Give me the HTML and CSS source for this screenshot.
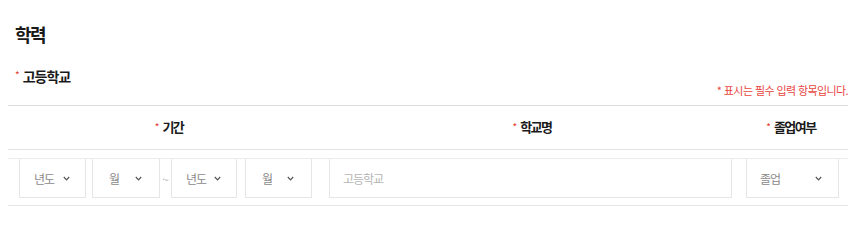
FILE: index.html
```html
<!DOCTYPE html>
<html lang="ko">
<head>
<meta charset="utf-8">
<link rel="stylesheet" href="styles.css">
</head>
<body>
<div class="wrap">
  <h2 class="title">학력</h2>
  <div class="sub"><span class="req">*</span>고등학교</div>
  <div class="note">* 표시는 필수 입력 항목입니다.</div>
  <div class="table">
    <div class="thead">
      <div class="th c1"><span class="req">*</span>기간</div>
      <div class="th c2"><span class="req">*</span>학교명</div>
      <div class="th c3"><span class="req">*</span>졸업여부</div>
    </div>
    <div class="tbody">
      <div class="sel s1"><span>년도</span><svg class="chev" width="7" height="5" viewBox="0 0 7 5"><polyline points="0.8,1 3.5,3.8 6.2,1" fill="none" stroke="#555" stroke-width="1.2"/></svg></div>
      <div class="sel s2"><span>월</span><svg class="chev" width="7" height="5" viewBox="0 0 7 5"><polyline points="0.8,1 3.5,3.8 6.2,1" fill="none" stroke="#555" stroke-width="1.2"/></svg></div>
      <div class="tilde">~</div>
      <div class="sel s3"><span>년도</span><svg class="chev" width="7" height="5" viewBox="0 0 7 5"><polyline points="0.8,1 3.5,3.8 6.2,1" fill="none" stroke="#555" stroke-width="1.2"/></svg></div>
      <div class="sel s4"><span>월</span><svg class="chev" width="7" height="5" viewBox="0 0 7 5"><polyline points="0.8,1 3.5,3.8 6.2,1" fill="none" stroke="#555" stroke-width="1.2"/></svg></div>
      <div class="input">고등학교</div>
      <div class="sel s5"><span>졸업</span><svg class="chev" width="7" height="5" viewBox="0 0 7 5"><polyline points="0.8,1 3.5,3.8 6.2,1" fill="none" stroke="#555" stroke-width="1.2"/></svg></div>
    </div>
  </div>
</div>
</body>
</html>
```

FILE: styles.css
```css
* { box-sizing: border-box; }
html, body {
  margin: 0;
  padding: 0;
  background: #fff;
  font-family: "Noto Sans CJK KR", "Noto Sans", sans-serif;
  color: #222;
}
.wrap {
  width: 856px;
  padding: 0 8px;
  overflow: hidden;
}
.title {
  margin: 22px 0 0 7px;
  font-size: 18px;
  line-height: 24px;
  height: 24px;
  font-weight: 700;
  letter-spacing: -1.5px;
  color: #1a1a1a;
}
.sub {
  margin: 20px 0 0 7px;
  font-size: 14px;
  line-height: 18px;
  height: 18px;
  font-weight: 700;
  letter-spacing: -1px;
  color: #1a1a1a;
}
.req {
  color: #e8352e;
  font-size: 10px;
  font-weight: 400;
  vertical-align: 3px;
  margin-right: 3px;
  letter-spacing: 0;
}
.note {
  text-align: right;
  font-size: 11px;
  line-height: 13px;
  height: 13px;
  color: #e8463f;
  letter-spacing: -0.6px;
  white-space: nowrap;
}
.table {
  margin-top: 8px;
  border-top: 1px solid #dcdcdc;
}
.thead {
  display: flex;
  height: 44px;
  border-bottom: 1px solid #e3e3e3;
}
.th {
  display: flex;
  align-items: center;
  justify-content: center;
  font-size: 13px;
  font-weight: 700;
  letter-spacing: -1.5px;
  color: #1a1a1a;
  padding-bottom: 2px;
}
.c1 { width: 322px; }
.c2 { width: 404px; }
.c3 { width: 114px; }
.tbody {
  margin-top: 8px;
  border-top: 1px solid #ececec;
  border-bottom: 1px solid #e6e6e6;
  display: flex;
  align-items: flex-start;
  padding: 0 0 7px 11px;
}
.sel, .input {
  height: 39px;
  border: 1px solid #e6e6e6;
  border-top: none;
  display: flex;
  align-items: center;
  font-size: 12px;
  color: #8a8a8a;
  letter-spacing: -1px;
}
.sel {
  justify-content: space-between;
  padding: 0 15px 0 14px;
}
.chev { flex: none; margin-top: 1px; }
.s1 { width: 67px; }
.s2 { width: 68px; margin-left: 6px; padding-left: 16px; padding-right: 17px; }
.tilde {
  width: 11px;
  height: 39px;
  display: flex;
  align-items: center;
  justify-content: center;
  color: #bbb;
  font-size: 12px;
}
.s3 { width: 66px; padding-right: 15px; }
.s4 { width: 67px; margin-left: 8px; padding-left: 16px; padding-right: 17px; }
.input {
  width: 403px;
  margin-left: 17px;
  padding-left: 13px;
  color: #b5b5b5;
}
.s5 { width: 93px; margin-left: 14px; padding-left: 13px; padding-right: 16px; }
```
